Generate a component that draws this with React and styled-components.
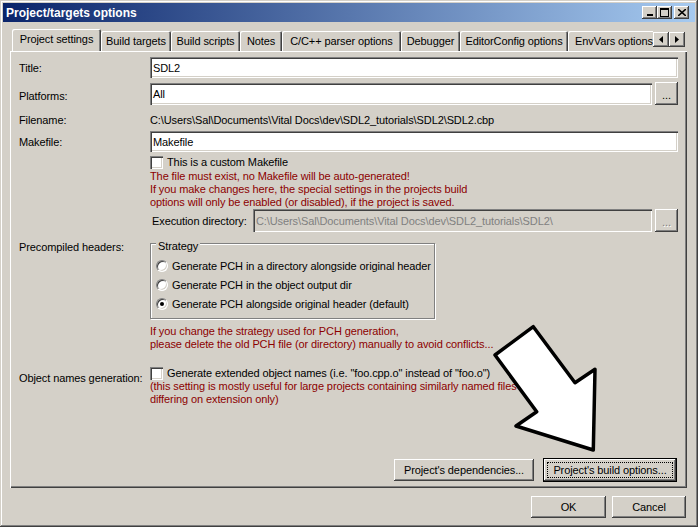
import React from "react";
import styled, { createGlobalStyle } from "styled-components";

const GlobalStyle = createGlobalStyle`
  html, body { margin: 0; padding: 0; background: #d4d0c8; }
  body { font-family: "Liberation Sans", Arial, sans-serif; font-size: 11px; letter-spacing: -0.1px; color: #000; }
  * { box-sizing: border-box; }
`;

const raised = `box-shadow: inset -1px -1px #404040, inset 1px 1px #fff, inset -2px -2px #808080;`;
const sunken = `box-shadow: inset 1px 1px #808080, inset 2px 2px #404040, inset -1px -1px #fff, inset -2px -2px #d4d0c8;`;

const Window = styled.div`
  position: relative;
  width: 698px;
  height: 527px;
  padding: 3px;
  background: #d4d0c8;
  display: flex;
  flex-direction: column;
  box-shadow: inset -1px -1px #404040, inset 1px 1px #d4d0c8, inset -2px -2px #808080, inset 2px 2px #fff;
`;

const TitleBar = styled.div`
  height: 19px;
  display: flex;
  align-items: center;
  padding: 0 6px 0 3px;
  background: linear-gradient(to right, #0a246a, #a6caf0);
  color: #fff;
  font-weight: bold;
  font-size: 12px;
  letter-spacing: 0;
`;

const TitleText = styled.div`
  flex: 1;
`;

const CaptionButton = styled.div`
  width: 15px;
  height: 13px;
  margin-left: ${p => p.$gap || 0}px;
  background: #d4d0c8;
  display: flex;
  align-items: center;
  justify-content: center;
  ${raised}
`;

const Body = styled.div`
  flex: 1;
  display: flex;
  flex-direction: column;
  padding: 7px 8px 0 7px;
`;

const TabStrip = styled.div`
  height: 22px;
  display: flex;
  padding-left: 2px;
  position: relative;
  z-index: 2;
`;

const TabList = styled.div`
  width: 641px;
  height: 100%;
  display: flex;
  align-items: flex-end;
  overflow: hidden;
`;

const Tab = styled.div`
  flex: none;
  width: ${p => p.$w}px;
  height: ${p => (p.$active ? 23 : 20)}px;
  margin-bottom: ${p => (p.$active ? -1 : 0)}px;
  align-self: ${p => (p.$active ? "flex-start" : "flex-end")};
  display: flex;
  align-items: center;
  justify-content: center;
  padding-bottom: ${p => (p.$active ? 3 : 0)}px;
  white-space: nowrap;
  background: #d4d0c8;
  border-radius: 2px 2px 0 0;
  box-shadow: inset 1px 1px #fff, inset -1px 0 #404040, inset -2px 0 #808080;
`;

const ScrollButton = styled.div`
  width: 16px;
  height: 15px;
  margin-top: 3px;
  display: flex;
  align-items: center;
  justify-content: center;
  background: #d4d0c8;
  ${raised}
`;

const Panel = styled.div`
  height: 437px;
  display: flex;
  flex-direction: column;
  padding: 6px 9px 6px 9px;
  box-shadow: inset 1px 1px #fff, inset -1px -1px #404040, inset -2px -2px #808080;
`;

const Row = styled.div`
  display: flex;
  align-items: ${p => p.$align || "center"};
  margin-top: ${p => p.$mt || 0}px;
`;

const Label = styled.div`
  width: 131px;
  flex: none;
  line-height: 14px;
  white-space: nowrap;
  margin-top: ${p => p.$mt || 0}px;
`;

const Field = styled.div`
  flex: 1;
  display: flex;
  flex-direction: column;
`;

const Line = styled.div`
  display: flex;
  align-items: center;
  gap: ${p => p.$gap || 3}px;
  line-height: 14px;
  white-space: nowrap;
`;

const InlineLabel = styled.span`
  width: 98px;
  margin-left: 2px;
  flex: none;
`;

const TextBox = styled.div`
  flex: 1;
  height: ${p => p.$h || 21}px;
  display: flex;
  align-items: center;
  padding: 0 3px;
  background: ${p => (p.$disabled ? "#d4d0c8" : "#fff")};
  color: ${p => (p.$disabled ? "#808080" : "#000")};
  white-space: nowrap;
  overflow: hidden;
  ${sunken}
`;

const DotsButton = styled.div`
  width: 23px;
  height: 23px;
  flex: none;
  display: flex;
  align-items: center;
  justify-content: center;
  padding-top: 3px;
  color: ${p => (p.$disabled ? "#808080" : "#000")};
  text-shadow: ${p => (p.$disabled ? "1px 1px #fff" : "none")};
  background: #d4d0c8;
  ${raised}
`;

const CheckBox = styled.div`
  width: 13px;
  height: 13px;
  flex: none;
  background: #fff;
  ${sunken}
`;

const Note = styled.div`
  color: #8c0000;
  line-height: 13px;
  white-space: nowrap;
  margin-top: ${p => p.$mt || 0}px;
`;

const GroupBox = styled.div`
  width: 285px;
  height: 76px;
  padding-left: 5px;
  border: 1px solid #808080;
  box-shadow: inset 1px 1px #fff, 1px 1px #fff;
`;

const GroupTitle = styled.div`
  width: fit-content;
  margin-top: -5px;
  padding: 0 2px;
  line-height: 14px;
  background: #d4d0c8;
`;

const RadioRow = styled.div`
  height: 19px;
  display: flex;
  align-items: center;
  gap: 4px;
  white-space: nowrap;
  margin-top: ${p => p.$mt || 0}px;
`;

const Radio = styled.div`
  width: 12px;
  height: 12px;
  flex: none;
  border-radius: 50%;
  background: #fff;
  display: flex;
  align-items: center;
  justify-content: center;
  border: 1px solid;
  border-color: #808080 #fff #fff #808080;
  box-shadow: inset 1px 1px #404040, inset -1px -1px #d4d0c8;
  &::after {
    content: "";
    width: 4px;
    height: 4px;
    border-radius: 50%;
    background: ${p => (p.$checked ? "#000" : "transparent")};
  }
`;

const ButtonRow = styled.div`
  margin-top: auto;
  display: flex;
  justify-content: flex-end;
  align-items: center;
  gap: 9px;
  padding-right: 1px;
`;

const PushButton = styled.div`
  width: ${p => p.$w}px;
  height: ${p => (p.$default ? 24 : 22)}px;
  display: flex;
  align-items: center;
  justify-content: center;
  position: relative;
  white-space: nowrap;
  background: #d4d0c8;
  ${p =>
    p.$default
      ? `border: 1px solid #000; box-shadow: inset -1px -1px #404040, inset 1px 1px #fff, inset -2px -2px #808080;`
      : raised}
  &::after {
    content: "";
    display: ${p => (p.$default ? "block" : "none")};
    position: absolute;
    inset: 3px;
    border: 1px dotted #000;
  }
`;

const Footer = styled.div`
  margin-top: 8px;
  display: flex;
  justify-content: flex-end;
  gap: 6px;
  padding-right: 1px;
`;

const Pointer = styled.svg`
  position: absolute;
  left: 490px;
  top: 322px;
  z-index: 5;
  pointer-events: none;
`;

const tabs = [
  ["Project settings", 89],
  ["Build targets", 70],
  ["Build scripts", 69],
  ["Notes", 42],
  ["C/C++ parser options", 119],
  ["Debugger", 59],
  ["EditorConfig options", 108],
  ["EnvVars options", 92],
];

export default function App() {
  return (
    <>
      <GlobalStyle />
      <Window>
        <TitleBar>
          <TitleText>Project/targets options</TitleText>
          <CaptionButton>
            <svg width="8" height="7" viewBox="0 0 8 7"><rect x="1" y="5" width="6" height="2" fill="#000" /></svg>
          </CaptionButton>
          <CaptionButton>
            <svg width="9" height="9" viewBox="0 0 9 9"><rect x="0.5" y="0.5" width="8" height="8" fill="none" stroke="#000" /><rect x="0" y="0" width="9" height="2" fill="#000" /></svg>
          </CaptionButton>
          <CaptionButton $gap={2}>
            <svg width="8" height="7" viewBox="0 0 8 7"><path d="M0 0 L8 7 M8 0 L0 7" stroke="#000" strokeWidth="1.6" /></svg>
          </CaptionButton>
        </TitleBar>

        <Body>
          <TabStrip>
            <TabList>
              {tabs.map(([name, w], i) => (
                <Tab key={name} $w={w} $active={i === 0}>{name}</Tab>
              ))}
            </TabList>
            <ScrollButton>
              <svg width="4" height="7" viewBox="0 0 4 7"><path d="M4 0 L0 3.5 L4 7 Z" fill="#000" /></svg>
            </ScrollButton>
            <ScrollButton>
              <svg width="4" height="7" viewBox="0 0 4 7"><path d="M0 0 L4 3.5 L0 7 Z" fill="#000" /></svg>
            </ScrollButton>
          </TabStrip>

          <Panel>
            <Row>
              <Label>Title:</Label>
              <TextBox>SDL2</TextBox>
            </Row>
            <Row $mt={4} $align="flex-start">
              <Label $mt={7}>Platforms:</Label>
              <Line>
                <TextBox $h={22} style={{ width: 502 }}>All</TextBox>
                <DotsButton>...</DotsButton>
              </Line>
            </Row>
            <Row $mt={8}>
              <Label>Filename:</Label>
              <Line>{"C:\\Users\\Sal\\Documents\\Vital Docs\\dev\\SDL2_tutorials\\SDL2\\SDL2.cbp"}</Line>
            </Row>
            <Row $mt={4}>
              <Label>Makefile:</Label>
              <TextBox>Makefile</TextBox>
            </Row>
            <Row $mt={3} $align="flex-start">
              <Label />
              <Field>
                <Line $gap={4}>
                  <CheckBox />
                  <span>This is a custom Makefile</span>
                </Line>
                <Note $mt={1}>The file must exist, no Makefile will be auto-generated!</Note>
                <Note>If you make changes here, the special settings in the projects build</Note>
                <Note>options will only be enabled (or disabled), if the project is saved.</Note>
                <Line>
                  <InlineLabel>Execution directory:</InlineLabel>
                  <TextBox $h={23} $disabled>{"C:\\Users\\Sal\\Documents\\Vital Docs\\dev\\SDL2_tutorials\\SDL2\\"}</TextBox>
                  <DotsButton $disabled>...</DotsButton>
                </Line>
              </Field>
            </Row>
            <Row $mt={11} $align="flex-start">
              <Label $mt={-3}>Precompiled headers:</Label>
              <Field>
                <GroupBox>
                  <GroupTitle>Strategy</GroupTitle>
                  <RadioRow $mt={3}><Radio />Generate PCH in a directory alongside original header</RadioRow>
                  <RadioRow><Radio />Generate PCH in the object output dir</RadioRow>
                  <RadioRow><Radio $checked />Generate PCH alongside original header (default)</RadioRow>
                </GroupBox>
                <Note $mt={6}>If you change the strategy used for PCH generation,</Note>
                <Note>please delete the old PCH file (or directory) manually to avoid conflicts...</Note>
              </Field>
            </Row>
            <Row $mt={15} $align="flex-start">
              <Label $mt={5}>Object names generation:</Label>
              <Field>
                <Line $gap={4}>
                  <CheckBox />
                  <span>Generate extended object names (i.e. "foo.cpp.o" instead of "foo.o")</span>
                </Line>
                <Note>(this setting is mostly useful for large projects containing similarly named files</Note>
                <Note>differing on extension only)</Note>
              </Field>
            </Row>
            <ButtonRow>
              <PushButton $w={140}>Project's dependencies...</PushButton>
              <PushButton $w={134} $default>Project's build options...</PushButton>
            </ButtonRow>
          </Panel>

          <Footer>
            <PushButton $w={75}>OK</PushButton>
            <PushButton $w={74}>Cancel</PushButton>
          </Footer>
        </Body>

        <Pointer width="112" height="134" viewBox="0 0 112 134">
          <polygon
            points="43.3,4.7 5,33 46.7,89.7 26,104 103.3,128 105,47.3 85,60.7"
            fill="#fff"
            stroke="#000"
            strokeWidth="3.5"
            strokeLinejoin="round"
          />
        </Pointer>
      </Window>
    </>
  );
}
